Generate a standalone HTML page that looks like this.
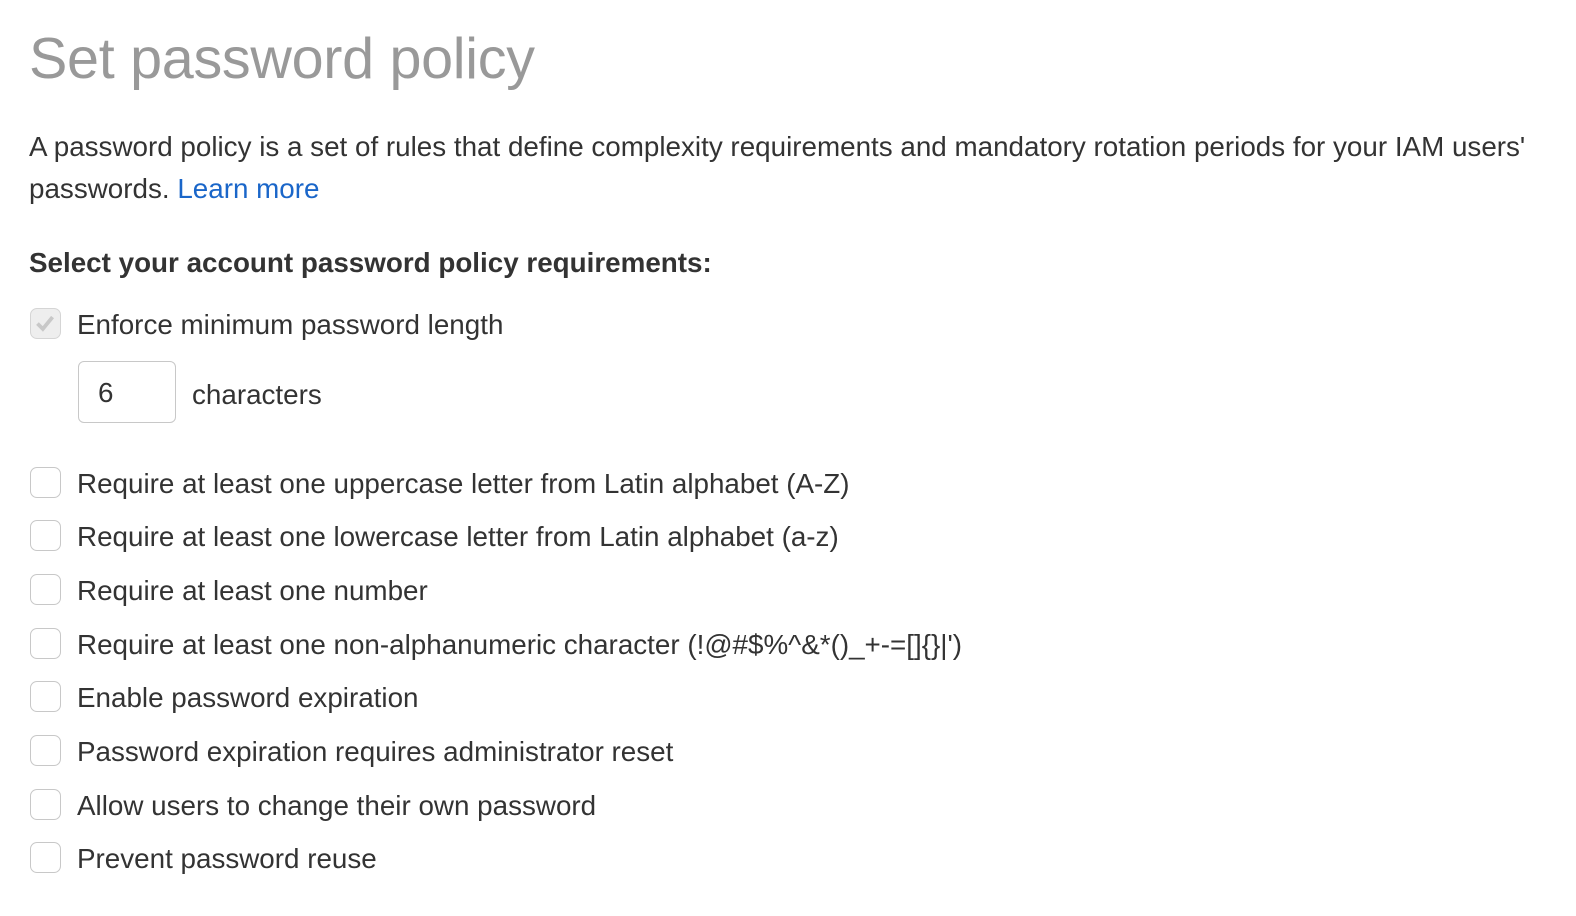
<!DOCTYPE html>
<html><head><style>
body{margin:0;background:#fff;font-family:"Liberation Sans",Arial,sans-serif;color:#333;}
h1{position:absolute;left:29px;top:24px;margin:0;font-size:57.5px;font-weight:normal;color:#999;line-height:70px;letter-spacing:-0.3px}
.p{position:absolute;left:29px;top:126px;font-size:27.8px;line-height:42px;width:1560px;}
.p a{color:#1a66c9;text-decoration:none}
.h{position:absolute;left:29px;top:246px;font-size:27.8px;font-weight:bold;line-height:34px}
.row{position:absolute;left:29px;height:34px;font-size:27.8px;line-height:34px;}
.cb{position:absolute;left:1px;top:0px;width:31px;height:31px;border:1.5px solid #c8c8c8;border-radius:7px;box-sizing:border-box;background:#fff}
.row span{position:absolute;left:48px;white-space:nowrap}
.in{position:absolute;left:78px;top:361px;width:98px;height:62px;border:1.5px solid #c8c8c8;border-radius:6px;box-sizing:border-box;font-size:27.8px;line-height:61px;padding-left:19px}
.ch{position:absolute;left:192px;top:378px;font-size:27.8px;line-height:34px}
</style></head><body>
<h1>Set password policy</h1>
<div class="p">A password policy is a set of rules that define complexity requirements and mandatory rotation periods for your IAM users'<br>passwords. <a>Learn more</a></div>
<div class="h">Select your account password policy requirements:</div>
<div class="row" style="top:308px"><div class="cb" style="background:#eee;border-color:#d5d5d5"><svg width="28" height="28" viewBox="0 0 26 26" style="position:absolute;left:0;top:0"><path d="M6 13.5l5 5 9-11" fill="none" stroke="#c8c8c8" stroke-width="3.5"/></svg></div><span>Enforce minimum password length</span></div>
<div class="in">6</div><div class="ch">characters</div>
<div class="row" style="top:467px"><div class="cb"></div><span>Require at least one uppercase letter from Latin alphabet (A-Z)</span></div>
<div class="row" style="top:520px"><div class="cb"></div><span>Require at least one lowercase letter from Latin alphabet (a-z)</span></div>
<div class="row" style="top:574px"><div class="cb"></div><span>Require at least one number</span></div>
<div class="row" style="top:628px"><div class="cb"></div><span>Require at least one non-alphanumeric character (!@#$%^&amp;*()_+-=[]{}|')</span></div>
<div class="row" style="top:681px"><div class="cb"></div><span>Enable password expiration</span></div>
<div class="row" style="top:735px"><div class="cb"></div><span>Password expiration requires administrator reset</span></div>
<div class="row" style="top:789px"><div class="cb"></div><span>Allow users to change their own password</span></div>
<div class="row" style="top:842px"><div class="cb"></div><span>Prevent password reuse</span></div>
</body></html>
